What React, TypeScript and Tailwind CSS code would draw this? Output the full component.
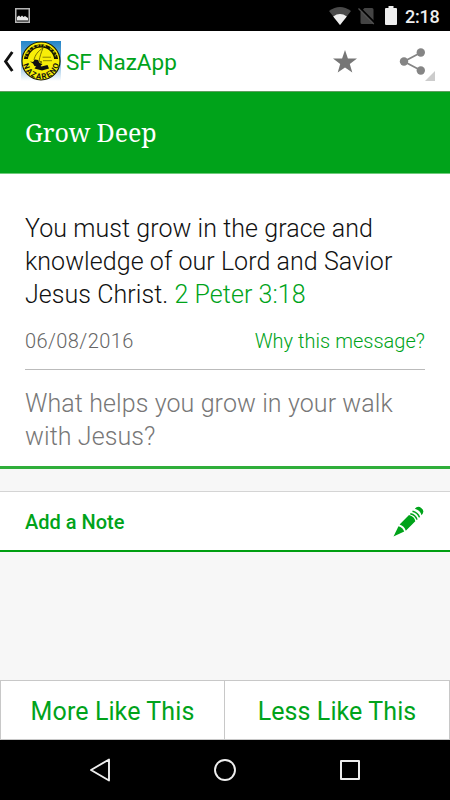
function StatusBar() {
  return (
    <div className="flex h-[31px] shrink-0 items-center bg-black">
      <svg className="ml-[15px] h-[15px] w-[15px]" viewBox="0 0 15 15">
        <rect x="0.75" y="0.75" width="13.5" height="13.5" fill="none" stroke="#b5b5b5" strokeWidth="1.5" />
        <path d="M2 12.5V9l2-1.5L5.500 9 7 7.500 8.500 9 10 8l3 2v2.500z" fill="#e8e8e8" />
      </svg>
      <div className="ml-auto flex items-center">
        <svg className="h-[18px] w-[22px]" viewBox="0 0 22 18">
          <path d="M0 4Q11-4 22 4L11 18z" fill="#4a4a4a" />
          <path d="M4.200 9.400Q11 4.500 17.800 9.400L11 18z" fill="#eee" />
        </svg>
        <svg className="ml-[7px] h-[18px] w-[18px]" viewBox="0 0 18 18">
          <path d="M6.500 1H14a1.500 1.500 0 0 1 1.500 1.500V15.500a1.500 1.500 0 0 1-1.500 1.500H4a1.500 1.500 0 0 1-1.500-1.500V5z" fill="#444" />
          <path d="M2 1 17 16" stroke="#000" strokeWidth="1.800" />
          <path d="M0.500 1.500 15.800 17" stroke="#505050" strokeWidth="1.300" />
        </svg>
        <svg className="ml-[9px] h-[19px] w-3" viewBox="0 0 12 19">
          <path d="M3.500 0h5v2H11a1 1 0 0 1 1 1v15a1 1 0 0 1-1 1H1a1 1 0 0 1-1-1V3a1 1 0 0 1 1-1h2.500z" fill="#eee" />
        </svg>
        <span className="mr-[10px] ml-2 w-[35px] pt-[2px] text-[18px] leading-none font-medium tracking-[-0.2px] whitespace-nowrap text-[#eee]">2:18</span>
      </div>
    </div>
  );
}

function Logo() {
  return (
    <svg className="h-10 w-10" viewBox="0 0 40 40">
      <defs>
        <linearGradient id="sky" x1="0" y1="0" x2="0" y2="1">
          <stop offset="0" stopColor="#2485c8" />
          <stop offset="0.5" stopColor="#75b1dc" />
          <stop offset="1" stopColor="#fff" />
        </linearGradient>
        <path id="arcTop" d="M5.200 20a14.800 14.800 0 0 1 29.600 0" />
        <path id="arcBottom" d="M1.900 20a18.100 18.100 0 0 0 36.200 0" />
      </defs>
      <rect width="40" height="40" fill="url(#sky)" />
      <circle cx="20" cy="20" r="19" fill="#f8ee08" stroke="#181800" strokeWidth="1.100" />
      <path d="M2.900 18a17.300 17.300 0 0 1 34.200 0h-4a13.200 13.200 0 0 0-26.200 0z" fill="#161600" />
      <text fontSize="4" fontWeight="700" fill="#f8ee08">
        <textPath href="#arcTop" textLength="38" startOffset="4">IGLESIA DEL</textPath>
      </text>
      <text fontSize="7.800" fontWeight="700" fill="#111">
        <textPath href="#arcBottom" textLength="50" startOffset="3.500">NAZARENO</textPath>
      </text>
      <path d="M22 7c-5 3-8 7-9 12l4 4 4-2-3-1c1-5 2-8 4-13z" fill="none" stroke="#555000" strokeWidth="0.800" />
      <path d="M9 20.500l3 .5 2-2.500 3 .5 1.500 3 3 1-3 3-5-1-1.500-2.500z" fill="#111" />
      <path d="M13.500 27.500l3-4 4 2 6-1.500 1.500 3.500-7 2z" fill="#111" />
      <path d="M21.500 16.200h8.500M22 19.700h9" stroke="#8c8500" strokeWidth="1" />
    </svg>
  );
}

function ActionBar() {
  return (
    <header className="flex h-[60px] shrink-0 items-center bg-white">
      <svg className="ml-[3px] h-[21px] w-[11px]" viewBox="0 0 11 21">
        <path d="M9.300 1 2.600 10.500 9.300 20" fill="none" stroke="#111" strokeWidth="2.900" />
      </svg>
      <div className="ml-[7px]">
        <Logo />
      </div>
      <h1 className="mt-[3px] ml-[5px] text-[22.500px] leading-none text-[#00a31a]">SF NazApp</h1>
      <svg className="mr-[-1px] ml-auto h-[23px] w-6" viewBox="0 0 24 23">
        <path d="M12 0 14.900 8.400 24 8.600 16.800 14.100 19.300 22.500 12 17.500 4.700 22.500 7.200 14.100 0 8.600 9.100 8.400z" fill="#767676" />
      </svg>
      <svg className="mt-1 mr-[15px] ml-[43px] h-[36px] w-[36px]" viewBox="0 0 36 36">
        <path d="M22 7.500 5 16.500 22 25.500" fill="none" stroke="#858585" strokeWidth="1.800" />
        <g fill="#858585">
          <circle cx="21.800" cy="7.500" r="4.200" />
          <circle cx="5" cy="16.500" r="4.200" />
          <circle cx="21.800" cy="25.500" r="4.200" />
        </g>
        <path d="M36 26v10H26z" fill="#ccc" />
      </svg>
    </header>
  );
}

function MessageCard() {
  return (
    <section className="h-[295px] shrink-0 border-b-[3px] border-[#2fae3a] bg-white px-[25px] pt-[38px]">
      <p className="text-[25px] leading-[33px] font-light tracking-[0.06px] whitespace-nowrap text-[#111]">
        You must grow in the grace and
        <br />
        knowledge of our Lord and Savior
        <br />
        Jesus Christ. <span className="text-[#00a31a]">2 Peter 3:18</span>
      </p>
      <div className="mt-[16px] flex h-[27px] items-center justify-between text-[20px] font-light">
        <span className="tracking-[0.4px] text-[#666]">06/08/2016</span>
        <a className="tracking-[0.030px] text-[#00a31a]">Why this message?</a>
      </div>
      <hr className="mt-[15px] border-[#bbb]" />
      <p className="mt-[17px] text-[25px] leading-[33px] font-light tracking-[0.1px] whitespace-nowrap text-[#777]">
        What helps you grow in your walk
        <br />
        with Jesus?
      </p>
    </section>
  );
}

function AddNote() {
  return (
    <section className="mt-[22px] flex h-[61px] shrink-0 items-center justify-between border-t border-b-2 border-t-[#d4d4d4] border-b-[#009f12] bg-white pr-[26px] pl-[25px]">
      <span className="pt-px text-[20px] leading-none font-medium text-[#00a31a]">Add a Note</span>
      <svg className="h-[31px] w-[31px]" viewBox="0 0 31 31">
        <g fill="#00a31a">
          <path d="M0.500 30.500 5.500 20.200Q9.800 21.500 11.200 25.600z" />
          <path d="M6.600 18.600 16 9Q21.500 10.500 22.300 15.200L12.800 24.700Q11.300 20 6.600 18.600z" />
          <path d="M21.800 2.800Q24.800-0.800 28.500 2.200T28.600 9.200Q27.200 4.300 21.800 2.800z" />
        </g>
        <path d="M17.300 7.700Q22.500 8.800 24 13.600M19.500 5.200Q25 6.500 26.500 11.400" fill="none" stroke="#00a31a" strokeWidth="1.500" />
      </svg>
    </section>
  );
}

function NavBar() {
  return (
    <nav className="flex h-[60px] shrink-0 items-center justify-between bg-black px-[87px]">
      <svg className="h-6 w-6" viewBox="0 0 24 24" fill="none" stroke="#eee" strokeWidth="1.900" strokeLinejoin="round">
        <path d="M22 1.500v21L4 12z" />
      </svg>
      <svg className="h-6 w-6" viewBox="0 0 24 24" fill="none" stroke="#eee" strokeWidth="1.900">
        <circle cx="12" cy="12" r="10" />
      </svg>
      <svg className="h-6 w-6" viewBox="0 0 24 24" fill="none" stroke="#eee" strokeWidth="2" strokeLinejoin="round">
        <rect x="2" y="3" width="18" height="18" />
      </svg>
    </nav>
  );
}

export default function App() {
  return (
    <main className="flex h-[800px] w-[450px] flex-col overflow-hidden bg-[#f7f7f7] font-[Roboto,sans-serif]">
      <StatusBar />
      <ActionBar />
      <div className="flex h-[83px] shrink-0 items-center border-t border-b border-t-[#5f9d60] border-b-[#6fcb7b] bg-[#00a31a] pl-[25px]">
        <h2 className="font-['Noto_Serif','DejaVu_Serif_Condensed','DejaVu_Serif',serif] text-[25px] leading-none tracking-[-0.1px] text-white">Grow Deep</h2>
      </div>
      <MessageCard />
      <AddNote />
      <div className="mt-auto grid h-[60px] shrink-0 grid-cols-2 border border-[#c8c8c8] bg-white text-[25px] tracking-[0.1px] text-[#00a31a]">
        <button className="border-r border-[#c8c8c8] pt-1">More Like This</button>
        <button className="pt-1">Less Like This</button>
      </div>
      <NavBar />
    </main>
  );
}
